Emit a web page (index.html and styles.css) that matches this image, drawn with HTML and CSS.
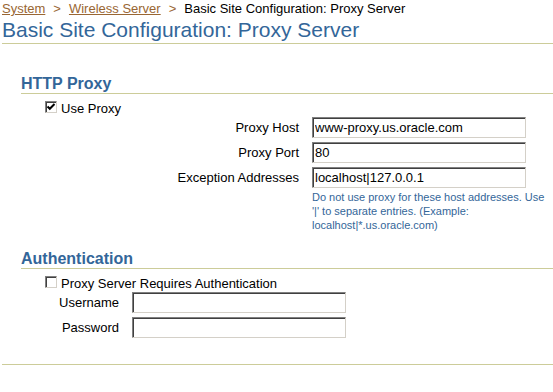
FILE: index.html
```html
<!DOCTYPE html>
<html lang="en">
<head>
  <meta charset="UTF-8">
  <title>Basic Site Configuration: Proxy Server</title>
  <link rel="stylesheet" href="styles.css">
</head>
<body>
  <div class="crumbs">
    <a href="#">System</a><span class="sep">&gt;</span><a href="#">Wireless Server</a><span class="sep">&gt;</span>Basic Site Configuration: Proxy Server
  </div>
  <h1 class="page-title">Basic Site Configuration: Proxy Server</h1>

  <div class="section">
    <h2 class="section-title">HTTP Proxy</h2>
    <div class="section-body">
      <label class="check-row">
        <span class="check">
          <svg width="10" height="10" viewBox="0 0 10 10"><path d="M1.5 4.5 L3.8 6.8 L8.5 2" fill="none" stroke="#000" stroke-width="2"/></svg>
        </span>
        Use Proxy
      </label>
      <div class="form-grid proxy-grid">
        <label for="proxyHost">Proxy Host</label>
        <input type="text" id="proxyHost" value="www-proxy.us.oracle.com">
        <label for="proxyPort">Proxy Port</label>
        <input type="text" id="proxyPort" value="80">
        <label for="exceptions">Exception Addresses</label>
        <input type="text" id="exceptions" value="localhost|127.0.0.1">
        <div class="help">Do not use proxy for these host addresses. Use '|' to separate entries. (Example: localhost|*.us.oracle.com)</div>
      </div>
    </div>
  </div>

  <div class="section section-auth">
    <h2 class="section-title">Authentication</h2>
    <div class="section-body">
      <label class="check-row">
        <span class="check"></span>
        Proxy Server Requires Authentication
      </label>
      <div class="form-grid auth-grid">
        <label for="username">Username</label>
        <input type="text" id="username">
        <label for="password">Password</label>
        <input type="password" id="password">
      </div>
    </div>
  </div>

  <div class="footer-rule"></div>
</body>
</html>
```

FILE: styles.css
```css
body {
  margin: 0;
  padding: 0 0 0 2px;
  background-color: #fff;
  color: #000;
  font-family: "Liberation Sans", Arial, sans-serif;
  font-size: 13px;
}
.crumbs {
  line-height: 17px;
  white-space: nowrap;
}
.crumbs a {
  color: #996633;
  text-decoration: underline;
}
.crumbs .sep {
  color: #996633;
  margin: 0 8px;
}
.page-title {
  margin: 0;
  font-size: 21px;
  font-weight: normal;
  line-height: 26px;
  color: #336699;
  border-bottom: 1px solid #cccc99;
}
.section {
  margin-top: 30px;
}
.section-auth {
  margin-top: 17px;
}
.section-title {
  margin: 0 0 0 19px;
  font-size: 16px;
  font-weight: bold;
  line-height: 19px;
  color: #336699;
  border-bottom: 1px solid #cccc99;
}
.section-body {
  padding-left: 43px;
}
.check-row {
  display: flex;
  align-items: flex-start;
  gap: 4px;
  margin-top: 6px;
  line-height: 17px;
}
.check {
  box-sizing: border-box;
  width: 12px;
  height: 12px;
  margin-top: 1px;
  background-color: #fff;
  border: 1px solid;
  border-color: #808080 #d4d0c8 #d4d0c8 #808080;
  box-shadow: inset 1px 1px 0 #404040;
  display: flex;
  align-items: center;
  justify-content: center;
}
.check svg {
  display: block;
}
.form-grid {
  display: grid;
  column-gap: 13px;
  row-gap: 4px;
  align-items: center;
}
.proxy-grid {
  grid-template-columns: 254px 238px;
}
.auth-grid {
  grid-template-columns: 74px 214px;
}
.form-grid label {
  text-align: right;
  line-height: 21px;
}
.form-grid input {
  box-sizing: border-box;
  width: 214px;
  height: 21px;
  margin: 0;
  padding: 0 2px;
  border: 1px solid;
  border-color: #808080 #d4d0c8 #d4d0c8 #808080;
  box-shadow: inset 1px 1px 0 #404040;
  font-family: "Liberation Sans", Arial, sans-serif;
  font-size: 13px;
  color: #000;
  outline: none;
}
.help {
  grid-column: 2;
  margin-top: -2px;
  font-size: 11px;
  line-height: 14px;
  color: #336699;
}
.footer-rule {
  margin-top: 26px;
  border-top: 1px solid #cccc99;
}
```
